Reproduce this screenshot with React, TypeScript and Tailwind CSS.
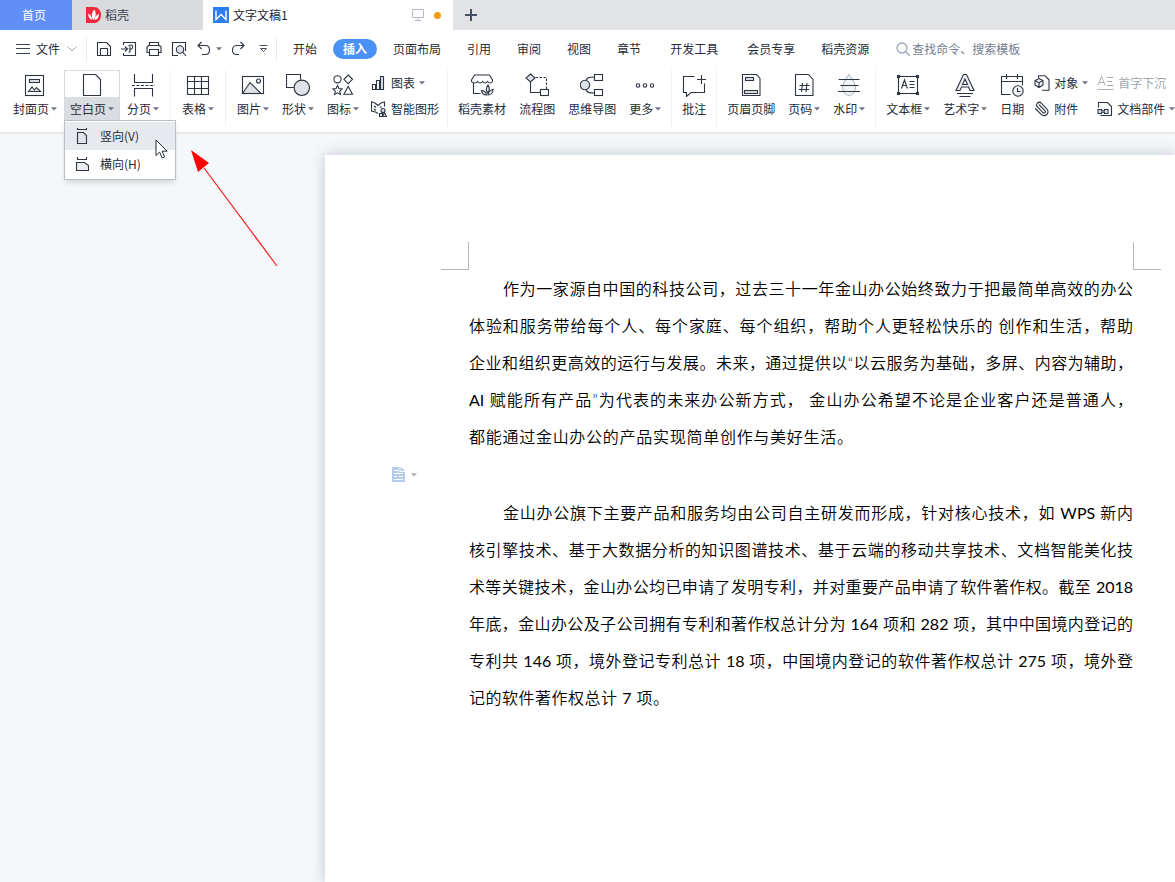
import { useState, type ReactNode } from "react";
import clsx from "clsx";
import { Paperclip } from "lucide-react";

const TAB_GROUPS = [
  ["开始", "插入", "页面布局", "引用", "审阅", "视图", "章节"],
  ["开发工具"],
  ["会员专享", "稻壳资源"],
];

const FIRST_PARAGRAPH = [
  "作为一家源自中国的科技公司，过去三十一年金山办公始终致力于把最简单高效的办公",
  "体验和服务带给每个人、每个家庭、每个组织，帮助个人更轻松快乐的 创作和生活，帮助",
  "企业和组织更高效的运行与发展。未来，通过提供以“以云服务为基础，多屏、内容为辅助，",
  "AI  赋能所有产品”为代表的未来办公新方式， 金山办公希望不论是企业客户还是普通人，",
  "都能通过金山办公的产品实现简单创作与美好生活。",
];

const SECOND_PARAGRAPH = [
  "金山办公旗下主要产品和服务均由公司自主研发而形成，针对核心技术，如 WPS 新内",
  "核引擎技术、基于大数据分析的知识图谱技术、基于云端的移动共享技术、文档智能美化技",
  "术等关键技术，金山办公均已申请了发明专利，并对重要产品申请了软件著作权。截至 2018",
  "年底，金山办公及子公司拥有专利和著作权总计分为 164 项和 282 项，其中中国境内登记的",
  "专利共 146 项，境外登记专利总计 18 项，中国境内登记的软件著作权总计 275 项，境外登",
  "记的软件著作权总计 7 项。",
];

/* Icons */

function Icon({ size = 24, children }: { size?: number; children: ReactNode }) {
  return (
    <svg
      width={size}
      height={size}
      viewBox={`0 0 ${size} ${size}`}
      fill="none"
      stroke="#2d3442"
      strokeWidth="1.1"
      className="shrink-0"
      aria-hidden="true"
    >
      {children}
    </svg>
  );
}

function Caret({ muted = false }: { muted?: boolean }) {
  return (
    <svg width="6" height="4" viewBox="0 0 6 4" className="shrink-0" aria-hidden="true">
      <path d="M0 0.300h6L3 3.500z" fill={muted ? "#a8adb5" : "#6d7484"} />
    </svg>
  );
}

const icons = {
  cover: (
    <Icon>
      <rect x="2.5" y="2.5" width="18" height="20" />
      <rect x="6.5" y="6.5" width="10" height="3" fill="#e0e3e8" />
      <path d="M5.500 18.500l3.500-4.500 2.500 3 2-2.500 4 4z" fill="#dfe2e7" />
    </Icon>
  ),
  blank: (
    <Icon>
      <path d="M3.5 1.5h12l5 5v16h-17z" />
    </Icon>
  ),
  pageBreak: (
    <Icon>
      <path d="M3.5 1v8.5h18V1M3.5 23.500v-8h18v8" />
      <path d="M1 12.500h23" strokeDasharray="3 1.5" />
    </Icon>
  ),
  table: (
    <Icon>
      <path d="M1.5 3.5h21v18h-21zM1.5 8.5h21M1.5 15.5h21M8.500 3.500v18M15.500 3.500v18" />
    </Icon>
  ),
  picture: (
    <Icon>
      <path d="M1.5 20.500l7.500-11 11 11z" fill="#dfe2e7" />
      <rect x="1.5" y="3.5" width="21" height="17" />
      <circle cx="17.500" cy="8" r="2" />
    </Icon>
  ),
  shapes: (
    <Icon>
      <path d="M14.500 6.500v-5h-14v13h7.500" />
      <circle cx="15.800" cy="14.800" r="7.700" fill="#dfe2e7" />
    </Icon>
  ),
  iconSet: (
    <Icon>
      <circle cx="6.500" cy="6.300" r="3.600" />
      <path d="M17.200 2l4.300 4.300-4.300 4.300-4.300-4.300zM17.200 13.500l4.300 7.700h-8.600z" />
      <path d="M6.500 12.500l1.400 3 3.200.4-2.400 2.200.7 3.400-2.900-1.700-2.900 1.700.7-3.400-2.400-2.200 3.200-.4z" />
    </Icon>
  ),
  store: (
    <Icon>
      <path d="M3.500 10v10.500h7" />
      <path d="M1.500 7L4.500 2h15l3 5v1.500c-1 2-3.800 2-5 0-1.300 2-3.700 2-5 0-1.300 2-3.700 2-5 0-1.300 2-5 2-6 0z" />
      <path d="M17.500 20c-2-3-1.500-5.500.5-8 2 3 2 5.500-.5 8zM16.500 22c-3 0-4.500-1.500-5-4.500 3 0 4.500 1.500 5 4.500zM18 22c.2-3 2-5 5-5.500 0 3-2 5.500-5 5.500z" fill="#dfe2e7" />
    </Icon>
  ),
  flow: (
    <Icon>
      <path d="M5.500 1L10 5 5.500 9 1 5z" fill="#dfe2e7" />
      <path d="M5.500 9v10.500H15" />
      <path d="M10.500 4.500h11V16" strokeDasharray="2.500 1.500" />
      <rect x="15.500" y="16.500" width="8" height="6" />
    </Icon>
  ),
  mindmap: (
    <Icon>
      <circle cx="5" cy="12" r="4.700" fill="#dfe2e7" />
      <path d="M6 7.500c1-3 3-3.500 8.500-3.500M6 16.500c1 3 3 3.500 8.500 3.500" />
      <rect x="14.500" y="1.500" width="8" height="6" />
      <rect x="14.500" y="16.500" width="8" height="6" />
    </Icon>
  ),
  more: (
    <Icon>
      <circle cx="5" cy="12.500" r="1.700" />
      <circle cx="12" cy="12.500" r="1.700" />
      <circle cx="19" cy="12.500" r="1.700" />
    </Icon>
  ),
  comment: (
    <Icon>
      <path d="M12.500 3.500h-11v16h3v4l4.500-4h13.500v-9" />
      <path d="M19.500 2v9M15 6.500h9" />
    </Icon>
  ),
  headerFooter: (
    <Icon>
      <path d="M3.500 1.500h14l3.500 4v17H3.500z" />
      <rect x="6.500" y="4.500" width="8" height="3" fill="#dfe2e7" />
      <rect x="5.500" y="17.500" width="13" height="3" fill="#dfe2e7" />
    </Icon>
  ),
  pageNumber: (
    <Icon>
      <path d="M3.500 1.500h13l4.500 5v16H3.500z" />
      <path d="M10.500 10l-1 9M15 10l-1 9M7.500 12.500h10M7 16.500h10" />
    </Icon>
  ),
  watermark: (
    <Icon>
      <path d="M12 1.500c3 4.500 6.500 8 6.500 13.500 0 4-3 7.500-6.500 7.500s-6.500-3.500-6.500-7.500C5.500 9.500 9 6 12 1.500z" stroke="#b9bdc5" fill="#f1f3f5" />
      <path d="M1.500 6.500h21M3.500 12.500h18M1 18.500h22" />
    </Icon>
  ),
  textBox: (
    <Icon>
      <rect x="2.500" y="3.500" width="19" height="17" />
      <g fill="#fff">
        <rect x="1.500" y="2.500" width="2" height="2" />
        <rect x="20.500" y="2.500" width="2" height="2" />
        <rect x="1.500" y="19.500" width="2" height="2" />
        <rect x="20.500" y="19.500" width="2" height="2" />
      </g>
      <path d="M5.500 15.500l3-8.500 3 8.500M6.500 12.500h4M13.500 8.500h5M13.500 11.500h5M13.500 14.500h5" />
    </Icon>
  ),
  wordArt: (
    <Icon>
      <path d="M10.500 1.500h3l7.500 16h-4l-1.500-3.500h-7L7 17.500H3zM12 6l-2.500 5.500h5z" fill="#eceef1" fillRule="evenodd" />
      <path d="M4 20.500h16M6.500 23.500h11" />
    </Icon>
  ),
  date: (
    <Icon>
      <path d="M10.500 21.500h-9v-18h21v9M1.500 8.500h21M6.500 1v5M17.500 1v5" />
      <circle cx="18" cy="18" r="5.200" fill="#f1f3f5" />
      <path d="M17.500 15v3.500h3" />
    </Icon>
  ),
  chart: (
    <Icon size={16}>
      <path d="M1.500 9.500h3v5h-3z" />
      <path d="M5.500 5.500h3v9h-3z" />
      <path d="M9.500 1.500h3v13h-3z" fill="#dfe2e7" />
    </Icon>
  ),
  smart: (
    <Icon size={16}>
      <path d="M7 12.500L4.500 11l-4-1V.8L4 2l3 2.500L10 2l3.500-1v4.500M3 5l2 1.500M3 8l2 1.500M9 6.500l1.500-1" />
      <circle cx="12" cy="9.500" r="2" fill="#dfe2e7" />
      <path d="M8.500 12.500h3v3h-3zM13.500 11.500l2 4h-4z" fill="#dfe2e7" />
    </Icon>
  ),
  object: (
    <Icon size={16}>
      <path d="M4.500 3V.800h6.500l4 4v10.400H8" />
      <path d="M5 3.500l4 2V10l-4 2.500L1 10V5.500zM1 5.500l4 2.200 4-2.200M5 7.700v4.800" fill="#eceef1" />
    </Icon>
  ),
  attachment: <Paperclip size={16} strokeWidth={1.7} color="#2d3442" className="shrink-0 -scale-x-100" />,
  dropCap: (
    <svg width="17" height="16" viewBox="0 0 17 16" fill="none" stroke="#a9adb3" className="shrink-0" aria-hidden="true">
      <path d="M.8 10.500L4.500 1.500l3.700 9M2 7.500h5M10 2.500h6.500M10 6.500h5M10 10.500h6.500M.5 14.500h16" />
    </svg>
  ),
  docPart: (
    <Icon size={16}>
      <path d="M1.500 6.500v-5h9l4 4v9h-11" />
      <path d="M1 8.500h3.500v1.200h3V8.500H11v4H7.500v-1.200h-3v1.200H1z" fill="#dfe2e7" />
    </Icon>
  ),
  portrait: (
    <Icon size={16}>
      <path d="M3.500 0v1.500h9V0" />
      <path d="M3.500 4.500h6l3 3v8h-9z" fill="#dfe2e7" />
    </Icon>
  ),
  landscape: (
    <Icon size={16}>
      <path d="M3.500 1v2.500h9V1" />
      <path d="M2.500 6.500h8l4 3v5h-12z" fill="#eceef1" />
    </Icon>
  ),
};

const quickActions = [
  {
    name: "保存",
    icon: (
      <Icon size={16}>
        <path d="M1.500 1.500h9l4 4v9h-13z" />
        <path d="M4.500 14.500v-7h7v7" />
      </Icon>
    ),
  },
  {
    name: "输出为PDF",
    icon: (
      <Icon size={16}>
        <path d="M2.500 4V1.500h12v13h-12V12M0 8h6M4 5.500L6.500 8 4 10.500" />
        <path d="M7.500 5c2.500-2 5-.5 4 2-.8 1.500-3 1.500-3.500.5M9 5.500v5.500H7.500" />
      </Icon>
    ),
  },
  {
    name: "打印",
    icon: (
      <Icon size={16}>
        <path d="M3.500 4.500v-3h9v3M3.500 11.500h-2.500v-5.500l1.500-1.500h11L15 6v5.500h-2.500" />
        <path d="M3.500 8.500h9v6h-9z" />
      </Icon>
    ),
  },
  {
    name: "打印预览",
    icon: (
      <Icon size={16}>
        <path d="M7 14.500H1.500v-13h13V10" />
        <circle cx="9" cy="8.500" r="3.700" fill="#dfe2e7" />
        <path d="M11.700 11.200l3.300 3.800" />
      </Icon>
    ),
  },
];

/* Ribbon pieces */

function LargeButton({ icon, label, caret = false }: { icon: ReactNode; label: string; caret?: boolean }) {
  return (
    <button type="button" className="flex shrink-0 flex-col items-center px-1.5 pt-[3px] hover:bg-gray-100">
      {icon}
      <span className="flex h-6 items-center gap-0.5">
        {label}
        {caret && <Caret />}
      </span>
    </button>
  );
}

function SmallButton({ icon, label, caret = false, disabled = false }: { icon: ReactNode; label: string; caret?: boolean; disabled?: boolean }) {
  return (
    <button type="button" disabled={disabled} className={clsx("flex h-[26px] items-center gap-1", disabled && "text-[#a3a6ab]")}>
      {icon}
      {label}
      {caret && <Caret />}
    </button>
  );
}

function Divider({ tight = false }: { tight?: boolean }) {
  return <div className={clsx("h-14 w-px shrink-0 bg-[#eff0f2]", tight ? "mx-[3px]" : "mx-1")} />;
}

function BlankPageMenu() {
  return (
    <div className="relative shrink-0">
      <button type="button" aria-expanded="true" className="flex w-14 flex-col items-center border border-[#d5d8dc] bg-white pt-0.5">
        {icons.blank}
        <span className="flex h-6 w-full items-center justify-center gap-0.5 bg-[#d9dce1]">
          空白页
          <Caret />
        </span>
      </button>
      <div role="menu" className="absolute top-[50px] left-0 z-20 w-28 border border-[#bcc0c5] bg-white py-px shadow-md">
        <button type="button" role="menuitem" className="relative flex h-7 w-full items-center gap-2.5 bg-[#e6e9ee] pl-[9px]">
          {icons.portrait}
          竖向(V)
          <svg width="13" height="20" viewBox="0 0 13 20" className="absolute top-[17px] left-[90px]" aria-hidden="true">
            <path d="M1 1v15.500l3.600-3.400 2.600 5.900 2.500-1.100-2.600-5.700h5z" fill="#fff" stroke="#222a38" />
          </svg>
        </button>
        <button type="button" role="menuitem" className="flex h-7 w-full items-center gap-2.5 pl-[9px]">
          {icons.landscape}
          横向(H)
        </button>
      </div>
    </div>
  );
}

function Ribbon() {
  return (
    <div className="flex h-[66px] items-start gap-px border-b-2 border-[#e5e7e9] bg-white pt-0.5 pl-[7px]">
      <LargeButton icon={icons.cover} label="封面页" caret />
      <BlankPageMenu />
      <LargeButton icon={icons.pageBreak} label="分页" caret />
      <Divider />
      <LargeButton icon={icons.table} label="表格" caret />
      <Divider />
      <LargeButton icon={icons.picture} label="图片" caret />
      <LargeButton icon={icons.shapes} label="形状" caret />
      <LargeButton icon={icons.iconSet} label="图标" caret />
      <div className="flex shrink-0 flex-col pr-1 pl-[5px]">
        <SmallButton icon={icons.chart} label="图表" caret />
        <SmallButton icon={icons.smart} label="智能图形" />
      </div>
      <Divider tight />
      <LargeButton icon={icons.store} label="稻壳素材" />
      <LargeButton icon={icons.flow} label="流程图" />
      <LargeButton icon={icons.mindmap} label="思维导图" />
      <LargeButton icon={icons.more} label="更多" caret />
      <Divider tight />
      <LargeButton icon={icons.comment} label="批注" />
      <Divider tight />
      <LargeButton icon={icons.headerFooter} label="页眉页脚" />
      <LargeButton icon={icons.pageNumber} label="页码" caret />
      <LargeButton icon={icons.watermark} label="水印" caret />
      <Divider tight />
      <LargeButton icon={icons.textBox} label="文本框" caret />
      <LargeButton icon={icons.wordArt} label="艺术字" caret />
      <LargeButton icon={icons.date} label="日期" />
      <div className="flex shrink-0 flex-col pl-[3px]">
        <SmallButton icon={icons.object} label="对象" caret />
        <SmallButton icon={icons.attachment} label="附件" />
      </div>
      <div className="flex shrink-0 flex-col pl-2">
        <SmallButton icon={icons.dropCap} label="首字下沉" disabled />
        <SmallButton icon={icons.docPart} label="文档部件" caret />
      </div>
    </div>
  );
}

function TitleBar() {
  return (
    <div className="flex h-[30px] bg-[#e1e3e7]">
      <a href="#home" className="flex w-[72px] items-center justify-center bg-[#5f8ff7] pr-1 text-white">
        首页
      </a>
      <a href="#docer" className="flex w-[131px] items-center gap-1 bg-[#d8dadd] pl-[14px] text-[#3c4250]">
        <svg width="15" height="16" viewBox="0 0 15 16" aria-hidden="true">
          <path d="M0 0h8c4 0 7 3.500 7 8s-3 8-7 8H0z" fill="#ee2b3b" />
          <path d="M7.300 13C5 9.500 5.300 6 8.500 2.500c2 3.500 1.700 7-1.200 10.500zM6 13C3.500 12 2 10 2.300 6.500 4.800 8 6 10 6 13zM8.500 13c.2-3 1.700-5 4.500-6 0 3.500-1.500 5.500-4.500 6z" fill="#fff" />
        </svg>
        稻壳
      </a>
      <div className="flex w-[250px] items-center bg-white pr-3 pl-2.5">
        <svg width="16" height="16" viewBox="0 0 16 16" aria-hidden="true">
          <rect width="16" height="16" fill="#2f7cf0" />
          <path d="M3 3.500v9l5-5 5 5v-9" fill="none" stroke="#fff" strokeWidth="1.400" />
        </svg>
        <span className="ml-1 text-[#1d2330]">文字文稿1</span>
        <svg width="12" height="12" viewBox="0 0 12 12" fill="none" stroke="#b3b8c2" className="ml-auto" aria-hidden="true">
          <path d="M.5.500h11v8H.5zM6 8.500v3M3 11.500h6" />
        </svg>
        <span className="ml-2.5 size-[7px] rounded-full bg-[#f09c0e]" />
      </div>
      <button type="button" aria-label="新建" className="flex w-9 items-center justify-center">
        <svg width="12" height="12" viewBox="0 0 12 12" stroke="#474f66" strokeWidth="2" aria-hidden="true">
          <path d="M6 0v12M0 6h12" />
        </svg>
      </button>
    </div>
  );
}

function MenuBar() {
  const [active, setActive] = useState("插入");

  return (
    <div className="flex h-[38px] items-center bg-white pl-4">
      <button type="button" className="flex items-center gap-1.5">
        <svg width="14" height="10" viewBox="0 0 14 10" stroke="#3b4252" aria-hidden="true">
          <path d="M0 .500h14M0 4.500h14M0 9.500h14" />
        </svg>
        文件
        <svg width="10" height="6" viewBox="0 0 10 6" fill="none" stroke="#a0a5af" className="ml-px" aria-hidden="true">
          <path d="M.5.500L5 5 9.500.500" />
        </svg>
      </button>
      <div className="mx-[9px] h-6 w-px bg-[#e8eaec]" />
      <div className="flex items-center gap-[9px]">
        {quickActions.map((action) => (
          <button key={action.name} type="button" aria-label={action.name}>
            {action.icon}
          </button>
        ))}
      </div>
      <button type="button" aria-label="撤销" className="ml-[9px] flex items-center gap-1">
        <Icon size={16}>
          <path d="M5.500 1L2 4.500 5.500 8M2 4.500h7.500c2.500 0 4 2 4 4.500s-1.500 4.500-4 4.500H6" />
        </Icon>
        <Caret />
      </button>
      <button type="button" aria-label="恢复" className="ml-2">
        <Icon size={16}>
          <path d="M10.500 1L14 4.500 10.500 8M14 4.500H6.500C4 4.500 2.500 6.500 2.500 9s1.500 4.500 4 4.500H9" />
        </Icon>
      </button>
      <button type="button" aria-label="自定义快速访问工具栏" className="ml-[13px]">
        <svg width="9" height="8" viewBox="0 0 9 8" fill="none" stroke="#4a5160" aria-hidden="true">
          <path d="M.5.500h8M1.500 3.500h6l-3 3z" />
        </svg>
      </button>
      <div className="mr-1.5 ml-2 h-6 w-px bg-[#e8eaec]" />
      <nav className="flex gap-[9px]">
        {TAB_GROUPS.map((group) => (
          <div key={group[0]} className="flex gap-1.5">
            {group.map((tab) => (
              <button
                key={tab}
                type="button"
                onClick={() => setActive(tab)}
                className={clsx(
                  "h-5 shrink-0 rounded-full px-2.5",
                  active === tab && "bg-[#4991f5] font-bold text-white"
                )}
              >
                {tab}
              </button>
            ))}
          </div>
        ))}
      </nav>
      <label className="ml-[17px] flex items-center gap-0.5">
        <svg width="14" height="14" viewBox="0 0 14 14" fill="none" stroke="#9ba3b8" strokeWidth="1.300" aria-hidden="true">
          <circle cx="6" cy="6" r="5" />
          <path d="M9.700 9.700l4 4" />
        </svg>
        <input
          type="text"
          aria-label="查找命令、搜索模板"
          placeholder="查找命令、搜索模板"
          className="w-[120px] bg-transparent outline-none placeholder:text-[#747d93]"
        />
      </label>
    </div>
  );
}

/* Document */

function Paragraph({ lines, lastLine }: { lines: string[]; lastLine: string }) {
  return (
    <p>
      {lines.map((line, i) => (
        <span
          key={line}
          className={clsx(
            "block whitespace-nowrap [text-align-last:justify]",
            i === 0 && "pl-[34px]",
            i === lines.length - 1 && lastLine
          )}
        >
          {/* Latin words and numbers are set a weight heavier than the Chinese text */}
          {line.split(/([A-Za-z0-9]+)/).map((part, j) =>
            j % 2 ? <span key={j} className="font-normal">{part}</span> : part
          )}
        </span>
      ))}
    </p>
  );
}

function DocumentPage() {
  return (
    <article className="flex-1 bg-white pt-[87px] pr-[14px] pl-[67px] shadow-[0_0_14px_rgba(80,85,95,0.3)]">
      <div className="flex justify-between pl-[49px]">
        <div className="size-7 border-r border-b border-[#b5b7ba]" />
        <div className="size-7 border-b border-l border-[#b5b7ba]" />
      </div>
      <div className="pr-7 font-['Lato','Noto_Sans_CJK_SC',sans-serif] text-base leading-[37px] font-[350] text-black">
        <div className="pl-[77px]">
          <Paragraph lines={FIRST_PARAGRAPH} lastLine="w-[384px]" />
        </div>
        <button type="button" aria-label="段落布局" className="flex h-[39px] items-center gap-1.5">
          <svg width="13" height="15" viewBox="0 0 13 15" aria-hidden="true">
            <path d="M0 0h9l4 4v11H0z" fill="#b4cbea" />
            <path d="M2 3.500h5M2 6.500h9M2 9.500h3M7 9.500h4M2 12.500h9M8 0v4.500h5" stroke="#fff" fill="none" />
          </svg>
          <Caret muted />
        </button>
        <div className="pl-[77px]">
          <Paragraph lines={SECOND_PARAGRAPH} lastLine="w-[200px]" />
        </div>
      </div>
    </article>
  );
}

export default function App() {
  return (
    <div className="flex min-h-screen flex-col overflow-x-clip bg-[#f4f8fb] font-['Noto_Sans_CJK_SC',sans-serif] text-xs whitespace-nowrap text-[#262c38]">
      <header className="relative z-10">
        <TitleBar />
        <MenuBar />
        <Ribbon />
      </header>
      <main className="relative flex flex-1 pt-[21px] pl-[325px]">
        <DocumentPage />
        {/* Pointer to the open menu */}
        <svg width="90" height="120" viewBox="0 0 90 120" className="absolute top-4 left-[190px]" aria-hidden="true">
          <path d="M14 18l73 98" stroke="#ff1a1a" strokeWidth="1.200" />
          <path d="M1 0l18 13-11 9z" fill="#ff0000" />
        </svg>
      </main>
    </div>
  );
}
